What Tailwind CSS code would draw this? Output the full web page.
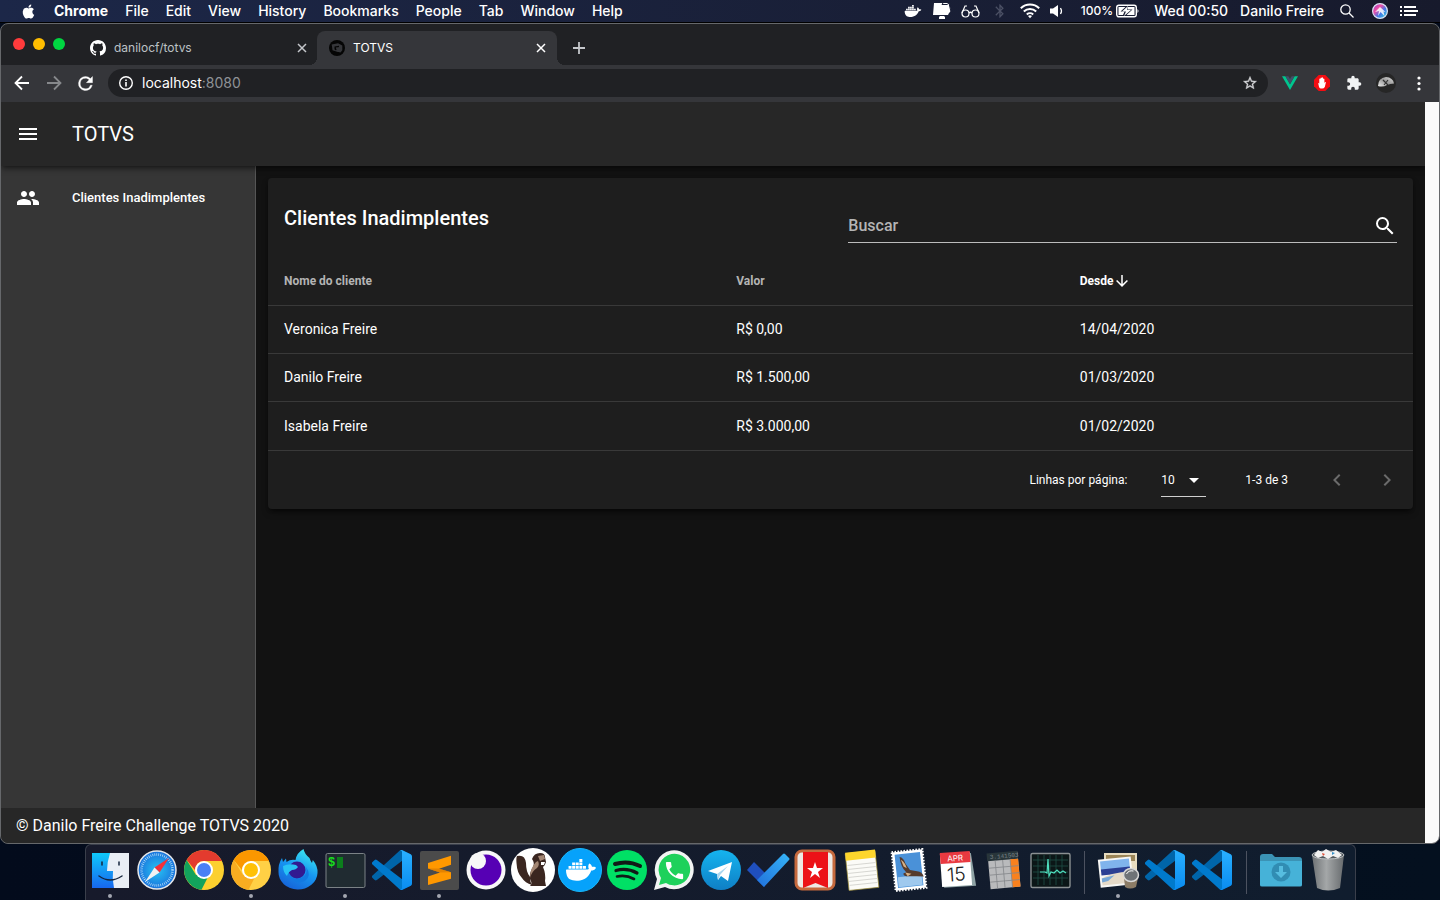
<!DOCTYPE html>
<html lang="pt-BR">
<head>
<meta charset="utf-8">
<title>TOTVS</title>
<script src="https://cdn.jsdelivr.net/npm/@tailwindcss/browser@4"></script>
</head>
<body class="flex h-screen flex-col overflow-hidden bg-[#030b1c] font-[Inter,sans-serif] text-white">

<svg class="absolute size-0" aria-hidden="true">
  <defs>
    <linearGradient id="plate" x1="0" y1="0" x2="0" y2="1"><stop offset="0" stop-color="#29b0ff"/><stop offset="1" stop-color="#0a8cf0"/></linearGradient>
    <symbol id="vscode" viewBox="0 0 100 100">
      <path fill="#0065a9" d="M96.5 10.6 75.9.87a6.2 6.2 0 0 0-7.1 1.2L1.3 63.6a4.2 4.2 0 0 0 0 6.2l5.5 5a4.2 4.2 0 0 0 5.3.24L93.35 13.4A4.13 4.13 0 0 1 100 16.7v-.24a6.2 6.2 0 0 0-3.5-5.86z"/>
      <path fill="#007acc" d="M96.5 89.4 75.9 99.1a6.2 6.2 0 0 1-7.1-1.2L1.3 36.4a4.2 4.2 0 0 1 0-6.2l5.5-5a4.2 4.2 0 0 1 5.3-.24L93.35 86.6A4.13 4.13 0 0 0 100 83.3v.24a6.2 6.2 0 0 1-3.5 5.86z"/>
      <path fill="url(#plate)" d="M75.86 99.1a6.2 6.2 0 0 1-7.1-1.2C71.1 100.2 75 98.6 75 95.3V4.7C75 1.4 71.1-.25 68.76 2.08a6.2 6.2 0 0 1 7.1-1.2l20.6 9.9A6.25 6.25 0 0 1 100 16.4v67.2a6.25 6.25 0 0 1-3.54 5.6z"/>
    </symbol>
    <symbol id="whale" viewBox="0 0 24 24">
      <path d="M21.81 10.25C21.75 10.21 21.25 9.82 20.17 9.82C19.89 9.82 19.61 9.85 19.33 9.9C19.12 8.5 17.95 7.79 17.9 7.76L17.61 7.59L17.43 7.86C17.19 8.22 17 8.63 16.92 9.05C16.72 9.85 16.84 10.61 17.25 11.26C16.76 11.54 15.96 11.61 15.79 11.61H2.62C2.28 11.61 2 11.89 2 12.24C2 13.39 2.18 14.54 2.58 15.62C3.03 16.81 3.71 17.69 4.58 18.23C5.56 18.83 7.17 19.17 9 19.17C9.79 19.17 10.61 19.1 11.42 18.95C12.54 18.75 13.62 18.36 14.61 17.79C15.43 17.32 16.16 16.72 16.78 16C17.82 14.83 18.43 13.5 18.89 12.35H19.07C20.21 12.35 20.91 11.89 21.3 11.5C21.56 11.26 21.75 10.97 21.88 10.65L21.96 10.42L21.81 10.25M3.7 9.3h2v1.9h-2zM6.1 9.3h2v1.9h-2zM8.5 9.3h2v1.9h-2zM10.9 9.3h2v1.9h-2zM13.3 9.3h2v1.9h-2zM6.1 7h2v1.9h-2zM8.5 7h2v1.9h-2zM10.9 7h2v1.9h-2zM10.9 4.7h2v1.9h-2z"/>
    </symbol>
  </defs>
</svg>

<!-- System menu bar -->
<header class="flex h-[23px] shrink-0 items-center justify-between border-b border-black bg-linear-to-r from-[#1c2748] to-[#171a2c] pr-[22px] pl-5 text-sm leading-5 font-medium">
  <nav class="flex items-center" aria-label="Menu">
    <button class="w-[34px]" aria-label="Apple"><svg class="size-[17px]" viewBox="0 0 24 24" fill="currentColor"><path d="M18.71,19.5C17.88,20.74 17,21.95 15.66,21.97C14.32,22 13.89,21.18 12.37,21.18C10.84,21.18 10.37,21.95 9.1,22C7.79,22.05 6.8,20.68 5.96,19.47C4.25,17 2.94,12.45 4.7,9.39C5.57,7.87 7.13,6.91 8.82,6.88C10.1,6.86 11.32,7.75 12.11,7.75C12.89,7.75 14.37,6.68 15.92,6.84C16.57,6.87 18.39,7.1 19.56,8.82C19.47,8.88 17.39,10.1 17.41,12.63C17.44,15.65 20.06,16.66 20.09,16.67C20.06,16.74 19.67,18.11 18.71,19.5M13,3.5C13.73,2.67 14.94,2.04 15.94,2C16.07,3.17 15.6,4.35 14.91,5.19C14.21,6.04 13.07,6.61 11.95,6.5C11.8,5.35 12.36,4.15 13,3.5Z"/></svg></button>
    <div class="flex gap-[17px]">
      <button class="font-bold">Chrome</button><button>File</button><button>Edit</button><button>View</button><button>History</button><button>Bookmarks</button><button>People</button><button>Tab</button><button>Window</button><button>Help</button>
    </div>
  </nav>
  <div class="flex items-center">
    <svg class="mr-2.5 size-5" fill="#fff" aria-hidden="true"><use href="#whale"/></svg>
    <svg class="mr-2.5 h-[18px] w-[18px]" viewBox="0 0 18 18" aria-hidden="true"><path fill="#fff" d="M1 1h15l2 8-2 2-1 2H0zM6 14h6l-1 1h1v2H6v-2h1z"/><path stroke="#171c33" d="m10 1-1 1.500h5L16 1M16 1l2 9" fill="none"/></svg>
    <svg class="mr-3 h-[18px] w-[19px]" viewBox="0 0 19 18" fill="none" stroke="#fff" stroke-width="1.200" aria-hidden="true"><circle cx="4.500" cy="11.500" r="3.500"/><circle cx="14.500" cy="11.500" r="3.500"/><path d="M8 11q1.500-1.500 3 0M1 11l3-7h2M18 11l-3-7h-2"/></svg>
    <svg class="mr-3 size-4" viewBox="0 0 24 24" fill="#4b5064" aria-hidden="true"><path d="M14.88,16.29L13,18.17V14.41M13,5.83L14.88,7.71L13,9.58M17.71,7.71L12,2H11V9.58L6.41,5L5,6.41L10.59,12L5,17.58L6.41,19L11,14.41V22H12L17.71,16.29L13.41,12L17.71,7.71Z"/></svg>
    <svg class="mr-2.5 h-4 w-5" viewBox="0 0 20 16" fill="none" stroke="#fff" stroke-width="2" aria-hidden="true"><path d="M.8 5.300a13.300 13.300 0 0 1 18.400 0M3.800 8.500a9 9 0 0 1 12.400 0M6.800 11.500a4.800 4.800 0 0 1 6.400 0"/><path d="m8 13 2 2.300 2-2.300q-2-1.400-4 0" fill="#fff" stroke="none"/></svg>
    <svg class="mr-[17px] h-4 w-[14px]" viewBox="0 0 14 16" aria-hidden="true"><path fill="#fff" d="M0 5.500h3L8 2v12l-5-3.500H0z"/><path d="M10.500 5q2 3 0 6" fill="none" stroke="#fff" stroke-width="1.300"/></svg>
    <span class="mr-[3px] text-xs">100%</span>
    <svg class="mr-3.5 h-4 w-6" viewBox="0 0 24 16" aria-hidden="true"><rect x=".7" y="2.200" width="19.600" height="11.600" rx="2.200" fill="none" stroke="#fff" stroke-width="1.400"/><path fill="#fff" d="M2.500 4h7l-5 4.500h4L7 12H2.500zM12 4h6.500v8h-8l6-5.500h-5zM21.500 6q2 2 0 4z"/><path fill="#fff" d="m12 3-6 5.500h4L8 13l7-6h-4z"/></svg>
    <span class="mr-3">Wed 00:50</span>
    <span class="mr-4">Danilo Freire</span>
    <button class="mr-[18px]" aria-label="Spotlight"><svg class="size-[14px]" viewBox="0 0 14 14" fill="none" stroke="#fff" stroke-width="1.300"><circle cx="5.500" cy="5.500" r="4.700"/><path d="m9 9 4.500 4.500"/></svg></button>
    <button class="mr-3" aria-label="Siri"><svg class="size-4" viewBox="0 0 16 16"><defs><linearGradient id="siri" x1="0" y1="0" x2="1" y2="1"><stop offset="0" stop-color="#8b35c9"/><stop offset=".35" stop-color="#ef4fa6"/><stop offset=".6" stop-color="#4376e8"/><stop offset="1" stop-color="#35e0d8"/></linearGradient></defs><circle cx="8" cy="8" r="7.400" fill="url(#siri)" stroke="#dbe2f4" stroke-width="1.200"/><path d="M8 4 3 9l4-1-1 5 2.500-4 4 4-1-4.500 2 .5z" fill="#fff" opacity=".85"/></svg></button>
    <button aria-label="Notificações"><svg class="h-4 w-[18px]" viewBox="0 0 18 16" fill="#fff"><path d="M0 3h2v2H0zM4 3h12v2H4zM0 7h2v2H0zM4 7h14v2H4zM0 11h2v2H0zM4 11h12v2H4z"/></svg></button>
  </div>
</header>

<!-- Browser window -->
<div class="flex min-h-0 flex-1 flex-col overflow-hidden rounded-lg border border-[#66686b] bg-[#202124]">
  <div class="flex h-[41px] shrink-0 items-end">
    <div class="flex w-[89px] items-center gap-2 self-center pb-0.5 pl-3">
      <button class="size-3 rounded-full bg-[#ff3b3c]" aria-label="Fechar"></button>
      <button class="size-3 rounded-full bg-[#ffbd00]" aria-label="Minimizar"></button>
      <button class="size-3 rounded-full bg-[#00d641]" aria-label="Maximizar"></button>
    </div>
    <div class="flex h-[34px] w-[227px] items-center text-xs text-[#bdc1c6]">
      <svg class="mr-2 size-4" viewBox="0 0 16 16" fill="#fff" aria-hidden="true"><path d="M8 0C3.580 0 0 3.580 0 8c0 3.540 2.290 6.530 5.470 7.590.4.070.55-.17.55-.38 0-.19-.01-.82-.01-1.490-2.010.37-2.530-.49-2.690-.94-.09-.23-.48-.94-.82-1.130-.28-.15-.68-.52-.01-.53.63-.01 1.080.58 1.230.82.72 1.210 1.870.87 2.330.66.070-.52.28-.87.51-1.070-1.780-.2-3.640-.89-3.640-3.950 0-.87.31-1.590.82-2.150-.08-.2-.36-1.020.08-2.120 0 0 .67-.21 2.200.82.64-.18 1.320-.27 2-.27s1.360.09 2 .27c1.530-1.040 2.200-.82 2.200-.82.44 1.100.16 1.920.08 2.120.51.56.82 1.270.82 2.150 0 3.070-1.870 3.750-3.650 3.950.29.25.54.73.54 1.480 0 1.070-.01 1.930-.01 2.200 0 .21.15.46.55.38A8.010 8.010 0 0 0 16 8c0-4.420-3.580-8-8-8z"/></svg>
      <span class="flex-1">danilocf/totvs</span>
      <button class="mr-2.5" aria-label="Fechar aba"><svg class="size-[10px]" viewBox="0 0 10 10" stroke="#c4c7cb" stroke-width="1.500"><path d="m1 1 8 8M9 1 1 9"/></svg></button>
    </div>
    <div class="relative flex h-[34px] w-60 items-center rounded-t-lg bg-[#35363a] pr-[11px] pl-3 text-xs">
      <span class="absolute bottom-0 -left-2 size-2 bg-[radial-gradient(circle_at_0_0,#202124_8px,#35363a_8px)]"></span>
      <span class="absolute -right-2 bottom-0 size-2 bg-[radial-gradient(circle_at_100%_0,#202124_8px,#35363a_8px)]"></span>
      <svg class="mr-2 size-4" viewBox="0 0 16 16" aria-hidden="true"><circle cx="8" cy="8" r="8" fill="#050505"/><path d="M2.700 4.500 9 3.200l4.300 2.300v4.700l-1.800 2.300-5-1.300-3-1z" fill="#35363a"/><path d="M5.500 6.500 10 5.800v3.700l-3.500.7-1-1z" fill="#050505"/><path d="m6.800 7.500 4-.5.500 3-3.500.7z" fill="#35363a"/></svg>
      <span class="flex-1">TOTVS</span>
      <button aria-label="Fechar aba TOTVS"><svg class="size-[10px]" viewBox="0 0 10 10" stroke="#fff" stroke-width="1.500"><path d="m1 1 8 8M9 1 1 9"/></svg></button>
    </div>
    <button class="ml-4 self-center pt-1.5" aria-label="Nova aba"><svg class="size-3" viewBox="0 0 12 12" stroke="#c4c7cb" stroke-width="1.800"><path d="M6 0v12M0 6h12"/></svg></button>
  </div>

  <div class="flex h-[37px] shrink-0 items-center bg-[#35363a] pr-[11px] pb-px pl-3 text-sm">
    <button class="mr-3.5" aria-label="Voltar"><svg class="size-[18px]" viewBox="0 0 18 18" fill="none" stroke="#fff" stroke-width="1.800"><path d="M16 9H3M9 2.500 2.500 9 9 15.500"/></svg></button>
    <button class="mr-3" aria-label="Avançar"><svg class="size-[18px]" viewBox="0 0 18 18" fill="none" stroke="#86888b" stroke-width="1.800"><path d="M2 9h13M9 2.500 15.500 9 9 15.500"/></svg></button>
    <button class="mr-3" aria-label="Recarregar"><svg class="size-[21px]" viewBox="0 0 24 24" fill="#fff" stroke="#fff" stroke-width=".4"><path d="M17.650 6.350A7.960 7.960 0 0 0 12 4a8 8 0 1 0 7.730 10h-2.080A6 6 0 1 1 12 6c1.660 0 3.140.69 4.220 1.780L13 11h7V4l-2.350 2.350z"/></svg></button>
    <div class="flex h-7 flex-1 items-center rounded-full bg-[#202124] pr-2.5 pl-2.5">
      <svg class="mr-2 size-4" viewBox="0 0 16 16" aria-hidden="true"><circle cx="8" cy="8" r="6.300" fill="none" stroke="#fff" stroke-width="1.400"/><path fill="#fff" d="M7.200 7h1.600v4.500H7.200zM7.200 4.400h1.600V6H7.200z"/></svg>
      <span class="flex-1">localhost<span class="text-[#8f9296]">:8080</span></span>
      <button aria-label="Favoritar"><svg class="size-4" viewBox="0 0 24 24" fill="#d4d6d9" stroke="#d4d6d9" stroke-width=".5"><path d="M22 9.240l-7.190-.62L12 2 9.190 8.630 2 9.240l5.460 4.730L5.820 21 12 17.270 18.180 21l-1.630-7.030L22 9.240zM12 15.400l-3.760 2.270 1-4.280-3.320-2.880 4.380-.38L12 6.100l1.710 4.040 4.380.38-3.320 2.880 1 4.280L12 15.400z"/></svg></button>
    </div>
    <div class="ml-3.5 flex items-center gap-4">
      <button aria-label="Vue"><svg class="size-4" viewBox="0 0 16 16"><path fill="#41506b" d="M3.500 1.300H6.300L8 4l1.700-2.700h2.800L8 9z"/><path fill="#00c58e" d="M0 1.300h3.300L8 9.400l4.700-8.100H16L8 15z"/></svg></button>
      <button aria-label="AdBlock"><svg class="size-4" viewBox="0 0 16 16"><path fill="#f40d12" d="M4.700 0h6.600L16 4.700v6.600L11.300 16H4.700L0 11.300V4.700z"/><path fill="#fff" d="M4.200 8.200q.9-.5 1.100.8V4q.6-.9 1.200 0v-1q.6-.9 1.300 0v-.3q.7-.8 1.300.2V4q.7-.8 1.300.1v4l.5-.9q1.200-.6 1 .4L10.800 12q-1 1.800-3 1.600Q5 13.500 4.800 11z"/></svg></button>
      <button aria-label="Extensões"><svg class="size-4" viewBox="0 0 24 24" fill="#f1f3f4"><path d="M20.500,11H19V7C19,5.890 18.100,5 17,5H13V3.500A2.500,2.500 0 0,0 10.500,1A2.500,2.500 0 0,0 8,3.500V5H4A2,2 0 0,0 2,7V10.800H3.500C5,10.800 6.200,12 6.200,13.500C6.200,15 5,16.200 3.500,16.200H2V20A2,2 0 0,0 4,22H7.800V20.500C7.800,19 9,17.800 10.500,17.800C12,17.800 13.200,19 13.200,20.500V22H17A2,2 0 0,0 19,20V16H20.500A2.500,2.500 0 0,0 23,13.500A2.500,2.500 0 0,0 20.500,11Z"/></svg></button>
      <button class="-mx-0.5" aria-label="Perfil"><svg class="size-5" viewBox="0 0 20 20"><defs><linearGradient id="moon" x1="0" y1="1" x2="1" y2="0"><stop offset="0" stop-color="#eee"/><stop offset=".5" stop-color="#999"/><stop offset="1" stop-color="#ddd"/></linearGradient></defs><circle cx="10" cy="10" r="10" fill="#262626"/><path d="M2 13Q2 5 10 4q7 .5 8 6.500-4 0-7 1.500-4 2.500-9 1z" fill="url(#moon)"/><path d="m7 7 5 5m0-5-4 5" stroke="#333" stroke-width="1.200"/></svg></button>
      <button aria-label="Mais opções"><svg class="h-4 w-[18px]" viewBox="0 0 18 16" fill="#fff"><circle cx="9" cy="3" r="1.600"/><circle cx="9" cy="8.500" r="1.600"/><circle cx="9" cy="14" r="1.600"/></svg></button>
    </div>
  </div>

  <!-- Page -->
  <div class="flex min-h-0 flex-1 bg-[#fafafa] pr-[14px] font-[Roboto,sans-serif]">
    <div class="flex min-w-0 flex-1 flex-col overflow-hidden bg-[#121212]">
      <div class="z-10 flex h-16 shrink-0 items-center bg-[#272727] pl-[15px] shadow-md shadow-black/40">
        <button class="mr-8" aria-label="Abrir menu"><svg class="size-6" viewBox="0 0 24 24" fill="#fff"><path d="M3,6H21V8H3V6M3,11H21V13H3V11M3,16H21V18H3V16Z"/></svg></button>
        <h1 class="text-xl">TOTVS</h1>
      </div>
      <div class="flex min-h-0 flex-1">
        <nav class="w-[255px] shrink-0 border-r border-[#555] bg-[#363636] pt-2">
          <a href="#" class="flex h-12 items-center pl-[15px] text-[13px] font-medium">
            <svg class="mr-8 size-6" viewBox="0 0 24 24" fill="#fff" aria-hidden="true"><path d="M16 11c1.660 0 2.990-1.340 2.990-3S17.660 5 16 5c-1.660 0-3 1.340-3 3s1.340 3 3 3zm-8 0c1.660 0 2.990-1.340 2.990-3S9.660 5 8 5C6.340 5 5 6.340 5 8s1.340 3 3 3zm0 2c-2.330 0-7 1.170-7 3.500V19h14v-2.500c0-2.330-4.670-3.500-7-3.500zm8 0c-.29 0-.62.020-.97.050 1.160.84 1.970 1.970 1.970 3.450V19h6v-2.500c0-2.330-4.670-3.500-7-3.500z"/></svg>
            Clientes Inadimplentes
          </a>
        </nav>
        <main class="min-w-0 flex-1 p-3">
          <section class="rounded bg-[#1e1e1e] shadow-md shadow-black/50">
            <div class="flex h-[79px] items-start justify-between px-4">
              <h2 class="pt-6 text-xl leading-8 font-medium">Clientes Inadimplentes</h2>
              <div class="mt-8 flex h-[33px] w-[49.3%] items-center border-b border-[#bcbcbc]">
                <input type="text" aria-label="Buscar" placeholder="Buscar" class="min-w-0 flex-1 bg-transparent text-base font-medium outline-none placeholder:text-[#b4b4b4]">
                <svg class="size-6" viewBox="0 0 24 24" fill="#fff" aria-hidden="true"><path d="M9.500,3A6.500,6.500 0 0,1 16,9.500C16,11.110 15.410,12.590 14.440,13.730L14.710,14H15.500L20.500,19L19,20.500L14,15.500V14.710L13.730,14.440C12.590,15.410 11.110,16 9.500,16A6.500,6.500 0 0,1 3,9.500A6.500,6.500 0 0,1 9.500,3M9.500,5C7,5 5,7 5,9.500C5,12 7,14 9.500,14C12,14 14,12 14,9.500C14,7 12,5 9.500,5Z"/></svg>
              </div>
            </div>
            <table class="w-full table-fixed border-collapse text-left text-sm">
              <colgroup><col class="w-[39.5%]"><col class="w-[30%]"><col></colgroup>
              <thead class="text-xs">
                <tr class="h-12 border-b border-[#393939]">
                  <th class="px-4 font-bold text-[#b4b4b4]">Nome do cliente</th>
                  <th class="px-4 font-bold text-[#b4b4b4]">Valor</th>
                  <th class="px-4 font-bold"><button class="flex items-center">Desde<svg class="size-[18px]" viewBox="0 0 24 24" fill="#fff" aria-hidden="true"><path d="M11,4H13V16L18.500,10.500L19.920,11.920L12,19.840L4.080,11.920L5.500,10.500L11,16V4Z"/></svg></button></th>
                </tr>
              </thead>
              <tbody>
                <tr class="h-12 border-b border-[#393939]"><td class="px-4">Veronica Freire</td><td class="px-4">R$ 0,00</td><td class="px-4">14/04/2020</td></tr>
                <tr class="h-12 border-b border-[#393939]"><td class="px-4">Danilo Freire</td><td class="px-4">R$ 1.500,00</td><td class="px-4">01/03/2020</td></tr>
                <tr class="h-[49px]"><td class="px-4">Isabela Freire</td><td class="px-4">R$ 3.000,00</td><td class="px-4">01/02/2020</td></tr>
              </tbody>
            </table>
            <div class="flex h-[59px] items-center justify-end border-t border-[#393939] pr-3.5 text-xs">
              <label for="rows" class="mr-[34px]">Linhas por página:</label>
              <div class="relative mr-[39px] mb-3 h-[33px] w-[45px] self-end border-b border-[#d0d0d0]">
                <select id="rows" class="h-full w-full appearance-none bg-transparent pb-px outline-none"><option>10</option><option>25</option></select>
                <svg class="pointer-events-none absolute top-1 right-0 size-6" viewBox="0 0 24 24" fill="#fff" aria-hidden="true"><path d="M7,10L12,15L17,10H7Z"/></svg>
              </div>
              <span class="mr-[37px]">1-3 de 3</span>
              <button class="mr-[26px]" aria-label="Página anterior"><svg class="size-6" viewBox="0 0 24 24" fill="#6b6b6b"><path d="M15.410,16.580L10.830,12L15.410,7.410L14,6L8,12L14,18L15.410,16.580Z"/></svg></button>
              <button aria-label="Próxima página"><svg class="size-6" viewBox="0 0 24 24" fill="#6b6b6b"><path d="M8.590,16.580L13.170,12L8.590,7.410L10,6L16,12L10,18L8.590,16.580Z"/></svg></button>
            </div>
          </section>
        </main>
      </div>
      <footer class="flex h-[35px] shrink-0 items-center bg-[#272727] pl-[15px] text-base">© Danilo Freire Challenge TOTVS 2020</footer>
    </div>
  </div>
</div>

<!-- Dock -->
<div class="flex h-14 shrink-0 justify-center bg-linear-to-r from-[#030b1c] to-[#04101f]">
  <div class="flex rounded-t-md border border-b-0 border-[#3a3f4b] bg-linear-to-r from-[#171a2b] to-[#101d2e] pr-[3px] pl-px">
    <button class="flex w-[47px] flex-col items-center pt-[3px]" aria-label="Finder"><svg class="size-11" viewBox="0 0 44 44"><defs><linearGradient id="fa" x1="0" y1="0" x2="0" y2="1"><stop offset="0" stop-color="#0fc9fa"/><stop offset="1" stop-color="#1767ed"/></linearGradient></defs><path fill="#e9eef5" d="M4 5h37v35H4z"/><path fill="url(#fa)" d="M4 5h18q-3 9-3 18h6q-1 8 1 17H4z"/><g fill="none" stroke="#14243c" stroke-linecap="round" stroke-width="1.500"><path d="M14 14v3M31 14v3M11 28q11 8 23 0"/></g></svg><span class="mt-0.5 size-1 rounded-full bg-[#a3a6b0]"></span></button>
    <button class="flex w-[47px] flex-col items-center pt-[3px]" aria-label="Safari"><svg class="size-11" viewBox="0 0 44 44"><defs><radialGradient id="sf"><stop offset="0" stop-color="#27c3f3"/><stop offset="1" stop-color="#1a72dc"/></radialGradient></defs><circle cx="22" cy="22" r="19" fill="url(#sf)" stroke="#e6e8ea" stroke-width="1.500"/><circle cx="22" cy="22" r="15.500" fill="none" stroke="#bfe3fa" stroke-width="2.500" stroke-dasharray=".7 1.300"/><path fill="#f4303a" d="M34 10 24.500 24.500l-5-5z"/><path fill="#f2f2f2" d="m10 34 9.500-14.500 5 5z"/></svg></button>
    <button class="flex w-[47px] flex-col items-center pt-[3px]" aria-label="Chrome"><svg class="size-11" viewBox="0 0 44 44"><circle cx="22" cy="22" r="20" fill="#fcd02f"/><path fill="#12a35c" d="M4.700 12 14 27h13l-7.500 14.800A20 20 0 0 1 4.700 12z"/><path fill="#e33b2e" d="M4.700 12A20 20 0 0 1 40 13H22q-8 0-9 9z"/><circle cx="22" cy="22" r="9" fill="#fff"/><circle cx="22" cy="22" r="7" fill="#4a80f5"/></svg></button>
    <button class="flex w-[47px] flex-col items-center pt-[3px]" aria-label="Chrome Canary"><svg class="size-11" viewBox="0 0 44 44"><circle cx="22" cy="22" r="20" fill="#ffd045"/><path fill="#f8ad21" d="M4.700 12 14 27h13l-7.500 14.800A20 20 0 0 1 4.700 12z"/><path fill="#fb9700" d="M4.700 12A20 20 0 0 1 40 13H22q-8 0-9 9z"/><circle cx="22" cy="22" r="9" fill="#fff"/><circle cx="22" cy="22" r="7" fill="#ffc107"/></svg><span class="mt-0.5 size-1 rounded-full bg-[#a3a6b0]"></span></button>
    <button class="flex w-[47px] flex-col items-center pt-[3px]" aria-label="Firefox Developer"><svg class="size-11" viewBox="0 0 44 44"><defs><linearGradient id="ff" x1=".8" y1="0" x2=".3" y2="1"><stop offset="0" stop-color="#3ff0f0"/><stop offset=".5" stop-color="#1797f2"/><stop offset="1" stop-color="#1663d8"/></linearGradient></defs><path fill="url(#ff)" d="M27.500 1q1 5 6 9 1 3 2.500 5l.8-3Q42 18 41.500 25A19.500 17 0 0 1 2.500 24q-.5-8 3.500-14l1 4 3-3.500.5 3.500q4-3 9-2 1-7 8-11z"/><circle cx="21" cy="22" r="8.500" fill="#321a91"/><path fill="#28c3f5" d="M7 18q6-3 13-1l2 2q-2 3-6 3-4 2-5 6-4-4-4-10z"/><path fill="#127ae2" d="M12 26q5 8 15 3 5-4 3-10 6 8-1 14-10 5-17-7z"/></svg></button>
    <button class="flex w-[47px] flex-col items-center pt-[3px]" aria-label="Terminal"><svg class="size-11" viewBox="0 0 44 44"><rect x="3" y="5.500" width="39" height="34" rx="1.500" fill="#202b31" stroke="#7b8286"/><text x="5" y="18" font-family="Liberation Mono" font-weight="700" font-size="12" fill="#19e01d">$</text><path fill="#0c7e1c" d="M14 9h6v11h-6z"/></svg><span class="mt-0.5 size-1 rounded-full bg-[#a3a6b0]"></span></button>
    <button class="flex w-[47px] flex-col items-center pt-[3px]" aria-label="VS Code"><span class="flex size-11 items-center justify-center"><svg class="size-10"><use href="#vscode"/></svg></span></button>
    <button class="flex w-[47px] flex-col items-center pt-[3px]" aria-label="Sublime Text"><svg class="size-11" viewBox="0 0 44 44"><rect x="3" y="3" width="39" height="39" rx="2" fill="#4b4b4b"/><path fill="#ff9800" d="M11 15 34 7.700v9l-12 4 12 3.500v6.500L11 37v-8.500l12-4-12-4z"/><path fill="#d97b00" d="m11 20.500 11 0 12 3.700-11 .3z" opacity=".7"/></svg><span class="mt-0.5 size-1 rounded-full bg-[#a3a6b0]"></span></button>
    <button class="flex w-[47px] flex-col items-center pt-[3px]" aria-label="Insomnia"><svg class="size-11" viewBox="0 0 44 44"><circle cx="22" cy="22" r="19.500" fill="#f8f8f8"/><circle cx="22" cy="22" r="15.500" fill="#5600b4"/><circle cx="14" cy="13" r="8" fill="#f8f8f8"/></svg></button>
    <button class="flex w-[47px] flex-col items-center pt-[3px]" aria-label="DBeaver"><svg class="size-11" viewBox="0 0 44 44"><circle cx="22" cy="22" r="22" fill="#fff"/><path fill="#3a2620" d="M6 8q8-2 9 7 0 9 4 14 0 5 2 8-7-2-10-7Q6 25 5.500 15q-.5-5 .5-7z"/><path fill="#3a2620" d="M21 11q2-6 8-6 5 0 5 4l1 5q-1 4-3 5 3 7 2 14l1 5H19q3-2 0-7-1-6 3-12 2-4-1-8z"/><path fill="#a38673" d="M25 14q-6 6-6 16 2-7 7-10 3-3 1-7zM27 8l6-1 1 4-5 2z"/><path fill="#fff" d="M30 14h4l-1 3h-3z"/></svg></button>
    <button class="flex w-[47px] flex-col items-center pt-[3px]" aria-label="Docker"><svg class="size-11" viewBox="0 0 44 44"><circle cx="22" cy="22" r="21.500" fill="#06a2fb" stroke="#18b8fc"/><svg x="5" y="4" width="36" height="36" fill="#fff"><use href="#whale"/></svg></svg></button>
    <button class="flex w-[47px] flex-col items-center pt-[3px]" aria-label="Spotify"><svg class="size-11" viewBox="0 0 44 44"><circle cx="22" cy="22" r="20" fill="#00e065"/><g fill="none" stroke="#111a17" stroke-linecap="round"><path d="M10 16q13-4 25 2" stroke-width="4"/><path d="M11 22.500q11-3 21 2.500" stroke-width="3.200"/><path d="M12 28.500q9-2 17 2.500" stroke-width="2.600"/></g></svg></button>
    <button class="flex w-[47px] flex-col items-center pt-[3px]" aria-label="WhatsApp"><svg class="size-11" viewBox="0 0 44 44"><path fill="#f3f4f3" d="M2 42l3-11A19.500 19.500 0 1 1 13 39z"/><path fill="#1ed15b" d="m7 37 2-7a15.800 15.800 0 1 1 5 5z"/><svg x="11" y="11" width="23" height="23" viewBox="0 0 24 24" fill="#fff"><path d="M6.620,10.790C8.060,13.620 10.380,15.940 13.210,17.380L15.410,15.180C15.690,14.900 16.080,14.820 16.430,14.930C17.550,15.300 18.750,15.500 20,15.500A1,1 0 0,1 21,16.500V20A1,1 0 0,1 20,21A17,17 0 0,1 3,4A1,1 0 0,1 4,3H7.500A1,1 0 0,1 8.500,4C8.500,5.250 8.700,6.450 9.070,7.570C9.180,7.920 9.100,8.310 8.820,8.590L6.620,10.790Z"/></svg></svg></button>
    <button class="flex w-[47px] flex-col items-center pt-[3px]" aria-label="Telegram"><svg class="size-11" viewBox="0 0 44 44"><defs><linearGradient id="tg" x1="0" y1="0" x2="0" y2="1"><stop offset="0" stop-color="#15b4ef"/><stop offset="1" stop-color="#0f7fc5"/></linearGradient></defs><circle cx="22" cy="22" r="20" fill="url(#tg)"/><path fill="#fff" d="m9 23 24-9-4 19-7-5-3 4-1-6z"/><path fill="#a9d6ef" d="m18 26 11-8-8 9-2 5z"/></svg></button>
    <button class="flex w-[47px] flex-col items-center pt-[3px]" aria-label="To Do"><svg class="size-11" viewBox="0 0 44 44"><defs><linearGradient id="td" x1="0" y1="1" x2="1" y2="0"><stop offset="0" stop-color="#2171dc"/><stop offset="1" stop-color="#35b4f7"/></linearGradient></defs><path fill="#1f4fbd" d="m1 22 7-8 15 15-5 10z"/><path fill="url(#td)" d="M11 32 37 6q1-1 2 0l4 4q1 1 0 2L18 39z"/></svg></button>
    <button class="flex w-[47px] flex-col items-center pt-[3px]" aria-label="Wunderlist"><svg class="size-11" viewBox="0 0 44 44"><rect x="3" y="3" width="38" height="38" rx="6" fill="#eee9e4" stroke="#c5693d" stroke-width="3"/><path fill="#ec1217" d="M10 4h25v36l-12.500-5L10 40z"/><path fill="#fff" d="m22 14 2 6h6l-5 4 2 6-5-4-5 4 2-6-5-4h6z"/></svg></button>
    <button class="flex w-[47px] flex-col items-center pt-[3px]" aria-label="Notas"><svg class="size-11" viewBox="0 0 44 44"><g transform="rotate(-6 22 22)"><path fill="#fbfbf7" stroke="#9b8a34" stroke-width=".7" d="M7 4h30v37H7z"/><path fill="#fdd52c" d="M7 3h30v8H7z"/><path stroke="#cfcfca" stroke-width=".8" d="M8 16h28M8 20h28M8 24h28M8 28h28M8 32h28M8 36h28"/></g></svg></button>
    <button class="flex w-[47px] flex-col items-center pt-[3px]" aria-label="Mail"><svg class="size-11" viewBox="0 0 44 44"><g transform="rotate(-6 22 22)"><path fill="#4a91d8" stroke="#fff" stroke-width="2.500" d="M8 4h28v36H8z"/><path stroke="#fff" stroke-width="2" stroke-dasharray="1.500 1.500" fill="none" d="M6.500 2.500h31v39h-31z"/><path fill="#9fc9ee" d="M10 28h24v10H10z"/><path fill="#553b2d" d="M14 8q4 1 5 7 2 4 4 7l7 2q5 1 6 6l-7-1-9-1q-4 0-4-3l3-1q-5-6-5-16z"/><path fill="#d7b184" d="M15 11q4 3 5 9l-3-2zM18 24l6 2-4 2z"/></g></svg></button>
    <button class="flex w-[47px] flex-col items-center pt-[3px]" aria-label="Calendário"><svg class="size-11" viewBox="0 0 44 44"><g transform="rotate(-4 22 22)"><path fill="#8fa3a5" d="M7 6h31l3 33H9z"/><path fill="#fff" d="M7 5h30v33H7z"/><path fill="#e93940" d="M7 4h30v11H7z"/><text x="22" y="13" text-anchor="middle" font-family="Inter" font-size="8" fill="#fff">APR</text><text x="22" y="33" text-anchor="middle" font-family="Inter" font-size="19" font-weight="300" fill="#222">15</text></g></svg></button>
    <button class="flex w-[47px] flex-col items-center pt-[3px]" aria-label="Calculadora"><svg class="size-11" viewBox="0 0 44 44"><g transform="rotate(-5 22 22)"><path fill="#b9babc" d="M8 5h30v35H8z"/><path fill="#28353a" d="M7 4h31v8H7z"/><path fill="#f9811e" d="M30 12h8v28h-8z"/><path stroke="#85878b" d="M8 19h30M8 26h30M8 33h30M15 12v28M22.500 12v28M30 12v28" stroke-width=".8"/><text x="10" y="10" font-family="Liberation Mono" font-size="6" fill="#7b878b">3.141503</text></g></svg></button>
    <button class="flex w-[47px] flex-col items-center pt-[3px]" aria-label="Monitor de Atividade"><svg class="size-11" viewBox="0 0 44 44"><rect x="3" y="5.500" width="39" height="34" rx="1.500" fill="#0b1617" stroke="#8a9092" stroke-width="1.400"/><path stroke="#1f4f47" stroke-width=".8" d="M5 12h35M5 18h35M5 24h35M5 30h35M10 7v30M16 7v30M22 7v30M28 7v30M34 7v30"/><path fill="none" stroke="#4fe0be" stroke-width="1.200" d="M12 24h5l2 1 1-14 1 17 2-4 3 1 3-3 3 3 3-2 3 2"/></svg></button>
    <span class="flex w-[21px] justify-center py-1.5"><span class="w-px bg-[#4c5260]"></span></span>
    <button class="flex w-[47px] flex-col items-center pt-[3px]" aria-label="Pré-visualização"><svg class="size-11" viewBox="0 0 44 44"><path fill="#e7dcc0" d="M8 5h33v29H8z"/><path fill="#9b8557" d="M10 7h29v6H10z"/><g transform="rotate(-6 20 22)"><path fill="#f7f7f5" d="M3 10h33v28H3z"/><path fill="#80b4ec" d="M5 12h29v10H5z"/><path fill="#2b3f93" d="M5 20h29v6H5z"/><path fill="#e5dac8" d="M5 29q10-5 29-4v11H5z"/><path fill="#75a7d8" d="m5 29 13-2-7 5-6 1z"/></g><path fill="#8c7c66" d="M28 30h14l-2 9q-6 3-11 0z"/><ellipse cx="35" cy="27" rx="7.500" ry="6.500" fill="#6f7377" stroke="#d8d8d8" stroke-width="1.500"/><path d="M30.500 26q2-4 7-3" fill="none" stroke="#fff"/></svg><span class="mt-0.5 size-1 rounded-full bg-[#a3a6b0]"></span></button>
    <button class="flex w-[47px] flex-col items-center pt-[3px]" aria-label="VS Code, janela 1"><span class="flex size-11 items-center justify-center"><svg class="size-10"><use href="#vscode"/></svg></span></button>
    <button class="flex w-[47px] flex-col items-center pt-[3px]" aria-label="VS Code, janela 2"><span class="flex size-11 items-center justify-center"><svg class="size-10"><use href="#vscode"/></svg></span></button>
    <span class="flex w-[22px] justify-center py-1.5"><span class="w-px bg-[#4c5260]"></span></span>
    <button class="flex w-[47px] flex-col items-center pt-[3px]" aria-label="Downloads"><svg class="size-11" viewBox="0 0 44 44"><path fill="#3b93b5" d="M1 9q0-3 3-3h9l3 3h24q3 0 3 3v10H1z"/><path fill="#46b2d8" d="M1 13h42v24q0 1.500-2 1.500H3q-2 0-2-1.500z"/><circle cx="22" cy="24" r="9.500" fill="#318db3"/><path fill="#56bde0" d="M20 18h4v6h4l-6 6-6-6h4z"/></svg></button>
    <button class="flex w-[47px] flex-col items-center pt-[3px]" aria-label="Lixo"><svg class="size-11" viewBox="0 0 44 44"><defs><linearGradient id="tr"><stop offset="0" stop-color="#6d7174"/><stop offset=".45" stop-color="#a4a7a8"/><stop offset="1" stop-color="#676b6e"/></linearGradient></defs><path fill="url(#tr)" d="M6 7h32l-4 33q-12 5-23 0z"/><ellipse cx="22" cy="7" rx="16" ry="4" fill="#50575c" stroke="#bfc3c5"/><path fill="#f1f1f1" d="m8 7 4-5 4 2 4-3 5 3 5-2 6 5-4 3-5-2-5 3-5-3-5 2z"/><path fill="#db4b35" d="m16 5 3 1-2 2z"/><path fill="#3390c8" d="m26 4 3 1-3 2z"/></svg></button>
  </div>
</div>
</body>
</html>
